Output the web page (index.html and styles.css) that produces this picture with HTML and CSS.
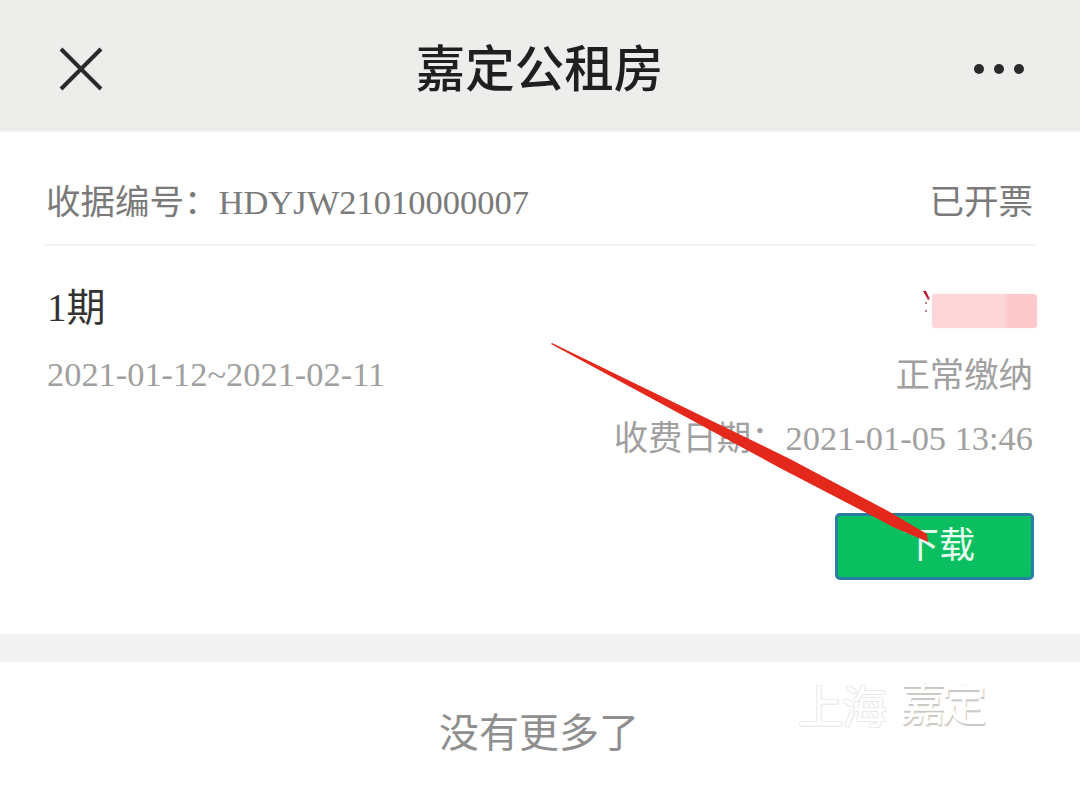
FILE: index.html
```html
<!DOCTYPE html>
<html lang="zh-CN">
<head>
<meta charset="utf-8">
<title>嘉定公租房</title>
<link rel="stylesheet" href="styles.css">
</head>
<body>
<div class="page">
  <header class="nav">
    <svg class="nav-close" width="44" height="44" viewBox="0 0 44 44"><path d="M2 2 L42 42 M42 2 L2 42" fill="none" stroke="#2a2a2a" stroke-width="4"/></svg>
    <h1 class="nav-title">嘉定公租房</h1>
    <svg class="nav-more" width="52" height="12" viewBox="0 0 52 12"><circle cx="6" cy="6" r="5" fill="#2a2a2a"/><circle cx="26" cy="6" r="5" fill="#2a2a2a"/><circle cx="46" cy="6" r="5" fill="#2a2a2a"/></svg>
  </header>
  <section class="card">
    <div class="receipt-row">
      <span>收据编号：HDYJW21010000007</span>
      <span>已开票</span>
    </div>
    <div class="detail">
      <div class="period-row">
        <span class="period">1期</span>
        <span class="amount">
          <svg class="yen" width="9" height="24" viewBox="0 0 9 24"><path d="M0 0 L3 0 L7 8 L5 9 Z" fill="#b8122c"/><circle cx="3" cy="12" r="1" fill="#9a5060"/><circle cx="3" cy="20" r="1" fill="#9a5060"/></svg>
          <span class="amount-blur"></span>
        </span>
      </div>
      <div class="dates-row">
        <span>2021-01-12~2021-02-11</span>
        <span class="pay-status">正常缴纳</span>
      </div>
      <div class="charge-row">收费日期：2021-01-05 13:46</div>
      <div class="action-row"><button class="download">下载</button></div>
    </div>
  </section>
  <div class="gap"></div>
  <footer class="end">没有更多了</footer>
  <div class="watermark"><span class="wm-a">上海</span><span class="wm-b">嘉定</span></div>
  <svg class="arrow" width="1080" height="800" viewBox="0 0 1080 800"><path d="M551 344 L552 343 L790 459 L888 511 L927 534 L928 542 L893 527 L880 520 L780 468 Z" fill="#e5281c"/></svg>
</div>
</body>
</html>
```

FILE: styles.css
```css
* { box-sizing: border-box; }
html, body { margin: 0; padding: 0; }
body {
  background: #fff;
  font-family: "Liberation Serif", "Noto Sans CJK SC", serif;
}
.page {
  position: relative;
  width: 1080px;
  height: 800px;
  overflow: hidden;
  background: #fff;
}
.nav {
  height: 132px;
  background: #ededec;
  display: flex;
  align-items: center;
  justify-content: space-between;
  padding: 0 55px 0 59px;
  border-bottom: 1px solid #f2f2f2;
}
.nav-close { margin-top: 6px; }
.nav-more { margin-top: 6px; }
.nav-title {
  margin: 0 0 0 3px;
  font-family: "Noto Sans CJK SC", sans-serif;
  font-size: 49.5px;
  font-weight: 500;
  line-height: 1.2;
  color: #1f1f1f;
}
.card {
  height: 502px;
  padding: 0 45px;
  background: #fff;
}
.receipt-row {
  height: 114px;
  padding: 21px 2px 0 1px;
  display: flex;
  align-items: center;
  justify-content: space-between;
  font-size: 34.5px;
  color: #7a7a7a;
  border-bottom: 2px solid #f3f3f3;
}
.detail { padding: 0 2px; }
.period-row {
  height: 104px;
  display: flex;
  align-items: center;
  justify-content: space-between;
  padding-top: 16px;
}
.period { font-size: 39px; color: #333; margin-top: -5px; }
.amount {
  display: flex;
  align-items: flex-start;
  margin-right: -4px;
  position: relative;
  top: 5px;
}
.yen { margin-top: -3px; }
.amount-blur {
  width: 105px;
  height: 34px;
  border-radius: 3px;
  background: linear-gradient(90deg, #fcd6d8 0 68%, #fccacd 72% 100%);
  box-shadow: 0 0 8px #fff5f5;
}
.dates-row {
  height: 48px;
  display: flex;
  align-items: center;
  justify-content: space-between;
  font-size: 34.4px;
  color: #a0a0a0;
}
.pay-status { margin-top: -4px; }
.charge-row {
  margin-top: 16px;
  height: 48px;
  line-height: 48px;
  text-align: right;
  font-size: 34.4px;
  color: #a0a0a0;
}
.action-row {
  margin: 51px -1px 0 0;
  display: flex;
  justify-content: flex-end;
}
.download {
  width: 199px;
  height: 67px;
  padding: 0 0 10px 9px;
  background: #0abf5f;
  border: 3px solid #2a7ea6;
  border-radius: 5px;
  color: #e9fff2;
  font-family: "Noto Sans CJK SC", sans-serif;
  font-size: 36px;
  line-height: 1;
}
.gap { height: 28px; background: #f3f3f3; }
.end {
  height: 138px;
  padding: 40px 2px 0 0;
  text-align: center;
  font-family: "Noto Sans CJK SC", sans-serif;
  font-size: 40px;
  line-height: 56px;
  color: #8f8f8f;
}
.watermark {
  position: absolute;
  left: 798px;
  top: 672px;
  display: flex;
  align-items: center;
  gap: 14px;
  font-family: "Noto Sans CJK SC", sans-serif;
  color: #fff;
}
.wm-a {
  font-size: 45px;
  letter-spacing: -1px;
  text-shadow: 1px 1px 0 #e8e8e8, -1px -1px 0 #ececec, 1px -1px 0 #eeeeee, -1px 1px 0 #eeeeee;
}
.wm-b {
  margin-top: -10px;
  font-size: 46px;
  letter-spacing: -5px;
  text-shadow: 1px 2px 1px #c9c6c2;
}
.arrow {
  position: absolute;
  left: 0;
  top: 0;
  pointer-events: none;
}
```
